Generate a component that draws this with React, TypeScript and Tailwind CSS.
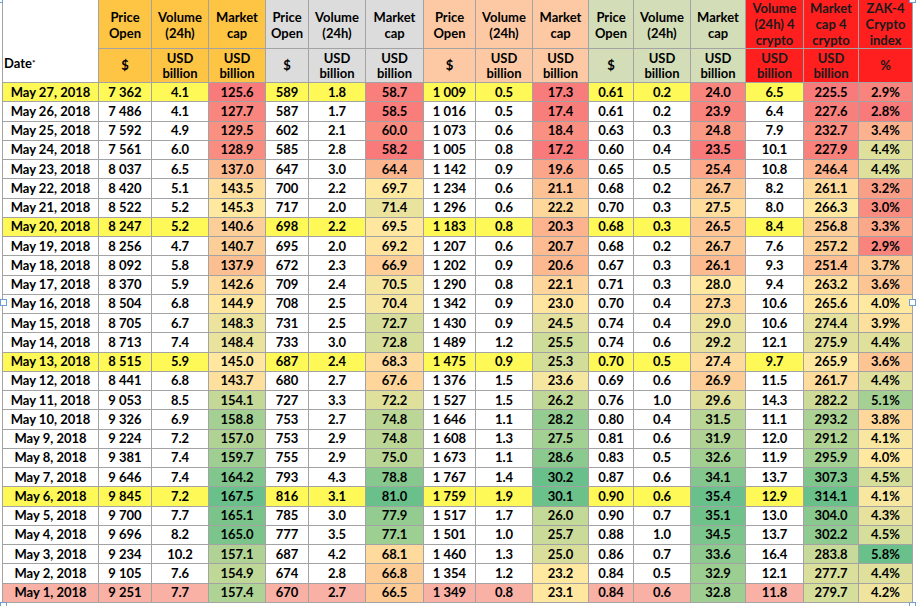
import React from "react";

const topLabels = [
  "Price\nOpen", "Volume\n(24h)", "Market\ncap",
  "Price\nOpen", "Volume\n(24h)", "Market\ncap",
  "Price\nOpen", "Volume\n(24h)", "Market\ncap",
  "Price\nOpen", "Volume\n(24h)", "Market\ncap",
  "Volume\n(24h) 4\ncrypto", "Market\ncap 4\ncrypto", "ZAK-4\nCrypto\nindex",
];

const unitLabels = [
  "$", "USD\nbillion", "USD\nbillion",
  "$", "USD\nbillion", "USD\nbillion",
  "$", "USD\nbillion", "USD\nbillion",
  "$", "USD\nbillion", "USD\nbillion",
  "USD\nbillion", "USD\nbillion", "%",
];

const headerBg = [
  "bg-[#fec545]", "bg-[#fec545]", "bg-[#fec545]",
  "bg-[#dcdcdc]", "bg-[#dcdcdc]", "bg-[#dcdcdc]",
  "bg-[#fcc9a4]", "bg-[#fcc9a4]", "bg-[#fcc9a4]",
  "bg-[#d3ddb7]", "bg-[#d3ddb7]", "bg-[#d3ddb7]",
  "bg-[#ff1f1f] text-[#1a1a1a]", "bg-[#ff1f1f] text-[#1a1a1a]", "bg-[#ff1f1f] text-[#1a1a1a]",
];

// date, then 15 values
const rows: string[][] = [
  ["May 27, 2018", "7 362", "4.1", "125.6", "589", "1.8", "58.7", "1 009", "0.5", "17.3", "0.61", "0.2", "24.0", "6.5", "225.5", "2.9%"],
  ["May 26, 2018", "7 486", "4.1", "127.7", "587", "1.7", "58.5", "1 016", "0.5", "17.4", "0.61", "0.2", "23.9", "6.4", "227.6", "2.8%"],
  ["May 25, 2018", "7 592", "4.9", "129.5", "602", "2.1", "60.0", "1 073", "0.6", "18.4", "0.63", "0.3", "24.8", "7.9", "232.7", "3.4%"],
  ["May 24, 2018", "7 561", "6.0", "128.9", "585", "2.8", "58.2", "1 005", "0.8", "17.2", "0.60", "0.4", "23.5", "10.1", "227.9", "4.4%"],
  ["May 23, 2018", "8 037", "6.5", "137.0", "647", "3.0", "64.4", "1 142", "0.9", "19.6", "0.65", "0.5", "25.4", "10.8", "246.4", "4.4%"],
  ["May 22, 2018", "8 420", "5.1", "143.5", "700", "2.2", "69.7", "1 234", "0.6", "21.1", "0.68", "0.2", "26.7", "8.2", "261.1", "3.2%"],
  ["May 21, 2018", "8 522", "5.2", "145.3", "717", "2.0", "71.4", "1 296", "0.6", "22.2", "0.70", "0.3", "27.5", "8.0", "266.3", "3.0%"],
  ["May 20, 2018", "8 247", "5.2", "140.6", "698", "2.2", "69.5", "1 183", "0.8", "20.3", "0.68", "0.3", "26.5", "8.4", "256.8", "3.3%"],
  ["May 19, 2018", "8 256", "4.7", "140.7", "695", "2.0", "69.2", "1 207", "0.6", "20.7", "0.68", "0.2", "26.7", "7.6", "257.2", "2.9%"],
  ["May 18, 2018", "8 092", "5.8", "137.9", "672", "2.3", "66.9", "1 202", "0.9", "20.6", "0.67", "0.3", "26.1", "9.3", "251.4", "3.7%"],
  ["May 17, 2018", "8 370", "5.9", "142.6", "709", "2.4", "70.5", "1 290", "0.8", "22.1", "0.71", "0.3", "28.0", "9.4", "263.2", "3.6%"],
  ["May 16, 2018", "8 504", "6.8", "144.9", "708", "2.5", "70.4", "1 342", "0.9", "23.0", "0.70", "0.4", "27.3", "10.6", "265.6", "4.0%"],
  ["May 15, 2018", "8 705", "6.7", "148.3", "731", "2.5", "72.7", "1 430", "0.9", "24.5", "0.74", "0.4", "29.0", "10.6", "274.4", "3.9%"],
  ["May 14, 2018", "8 713", "7.4", "148.4", "733", "3.0", "72.8", "1 489", "1.2", "25.5", "0.74", "0.6", "29.2", "12.1", "275.9", "4.4%"],
  ["May 13, 2018", "8 515", "5.9", "145.0", "687", "2.4", "68.3", "1 475", "0.9", "25.3", "0.70", "0.5", "27.4", "9.7", "265.9", "3.6%"],
  ["May 12, 2018", "8 441", "6.8", "143.7", "680", "2.7", "67.6", "1 376", "1.5", "23.6", "0.69", "0.6", "26.9", "11.5", "261.7", "4.4%"],
  ["May 11, 2018", "9 053", "8.5", "154.1", "727", "3.3", "72.2", "1 527", "1.5", "26.2", "0.76", "1.0", "29.6", "14.3", "282.2", "5.1%"],
  ["May 10, 2018", "9 326", "6.9", "158.8", "753", "2.7", "74.8", "1 646", "1.1", "28.2", "0.80", "0.4", "31.5", "11.1", "293.2", "3.8%"],
  ["May 9, 2018", "9 224", "7.2", "157.0", "753", "2.9", "74.8", "1 608", "1.3", "27.5", "0.81", "0.6", "31.9", "12.0", "291.2", "4.1%"],
  ["May 8, 2018", "9 381", "7.4", "159.7", "755", "2.9", "75.0", "1 673", "1.1", "28.6", "0.83", "0.5", "32.6", "11.9", "295.9", "4.0%"],
  ["May 7, 2018", "9 646", "7.4", "164.2", "793", "4.3", "78.8", "1 767", "1.4", "30.2", "0.87", "0.6", "34.1", "13.7", "307.3", "4.5%"],
  ["May 6, 2018", "9 845", "7.2", "167.5", "816", "3.1", "81.0", "1 759", "1.9", "30.1", "0.90", "0.6", "35.4", "12.9", "314.1", "4.1%"],
  ["May 5, 2018", "9 700", "7.7", "165.1", "785", "3.0", "77.9", "1 517", "1.7", "26.0", "0.90", "0.7", "35.1", "13.0", "304.0", "4.3%"],
  ["May 4, 2018", "9 696", "8.2", "165.0", "777", "3.5", "77.1", "1 501", "1.0", "25.7", "0.88", "1.0", "34.5", "13.7", "302.2", "4.5%"],
  ["May 3, 2018", "9 234", "10.2", "157.1", "687", "4.2", "68.1", "1 460", "1.3", "25.0", "0.86", "0.7", "33.6", "16.4", "283.8", "5.8%"],
  ["May 2, 2018", "9 105", "7.6", "154.9", "674", "2.8", "66.8", "1 354", "1.2", "23.2", "0.84", "0.5", "32.9", "12.1", "277.7", "4.4%"],
  ["May 1, 2018", "9 251", "7.7", "157.4", "670", "2.7", "66.5", "1 349", "0.8", "23.1", "0.84", "0.6", "32.8", "11.8", "279.7", "4.2%"],
];

// value columns (1-based after the date) that carry the red-yellow-green scale
const scaleCols = [3, 6, 9, 12, 14, 15];
const weekRows = [0, 7, 14, 21];

const RED = [248, 122, 122];
const MID = [255, 233, 161];
const GREEN = [106, 192, 138];

function num(s: string) {
  return parseFloat(s.replace("%", "").replace(" ", ""));
}

function mix(a: number[], b: number[], t: number) {
  const c = a.map((v, i) => Math.round(v + (b[i] - v) * t));
  return `rgb(${c[0]}, ${c[1]}, ${c[2]})`;
}

const scales: Record<number, { min: number; mid: number; max: number }> = {};
scaleCols.forEach((c) => {
  const vals = rows.map((r) => num(r[c])).sort((a, b) => a - b);
  scales[c] = { min: vals[0], mid: vals[Math.floor((vals.length - 1) / 2)], max: vals[vals.length - 1] };
});

function scaleColor(col: number, v: number) {
  const { min, mid, max } = scales[col];
  if (v <= mid) return mix(RED, MID, mid === min ? 1 : (v - min) / (mid - min));
  return mix(MID, GREEN, (v - mid) / (max - mid));
}

function Lines({ text }: { text: string }) {
  return (
    <>
      {text.split("\n").map((l, i) => (
        <span key={i} className="block">{l}</span>
      ))}
    </>
  );
}

function Handle({ className }: { className: string }) {
  return <div className={`absolute h-[7px] w-[7px] border border-[#6d9fd6] bg-white ${className}`} />;
}

export default function App() {
  return (
    <div className="relative h-[606px] w-[919px] overflow-hidden bg-white font-['Lato','Liberation_Sans',sans-serif] text-[13px] font-bold text-black">
      <div className="ml-[2px] inline-grid grid-cols-[95px_52px_56px_56px_42px_56px_57px_51px_56px_55px_44px_56px_54px_57px_54px_53px] grid-rows-[48px_33px_repeat(27,18.26px)] gap-px bg-[#a3a3a3] px-px pb-px">
        <div className="row-span-2 flex items-end bg-white pb-[9px] pl-[1px]">
          <span>
            Date<sup className="relative -top-[2px] text-[8px]">*</sup>
          </span>
        </div>
        {topLabels.map((l, i) => (
          <div
            key={i}
            className={`flex flex-col items-center text-center leading-[16px] ${i >= 12 ? "justify-start" : "justify-center pt-[2px]"} ${headerBg[i]}`}
          >
            <Lines text={l} />
          </div>
        ))}
        {unitLabels.map((l, i) => (
          <div key={i} className={`flex flex-col items-center justify-center text-center leading-[15px] ${headerBg[i]}`}>
            <Lines text={l} />
          </div>
        ))}
        {rows.map((r, ri) => {
          const rowBg = weekRows.includes(ri) ? "bg-[#fff957]" : ri === rows.length - 1 ? "bg-[#f9b0a5]" : "bg-white";
          return r.map((cell, ci) =>
            scaleCols.includes(ci) ? (
              <div key={`${ri}-${ci}`} className="flex items-center justify-center leading-none" style={{ backgroundColor: scaleColor(ci, num(cell)) }}>
                {cell}
              </div>
            ) : (
              <div key={`${ri}-${ci}`} className={`flex items-center justify-center leading-none ${rowBg}`}>
                {cell}
              </div>
            )
          );
        })}
      </div>

      <Handle className="-left-[4px] -top-[4px]" />
      <Handle className="-top-[4px] left-[909px]" />
      <Handle className="left-0 top-[299px]" />
      <Handle className="left-[909px] top-[299px]" />
      <Handle className="left-0 top-[602px]" />
      <Handle className="left-[909px] top-[602px]" />
    </div>
  );
}
